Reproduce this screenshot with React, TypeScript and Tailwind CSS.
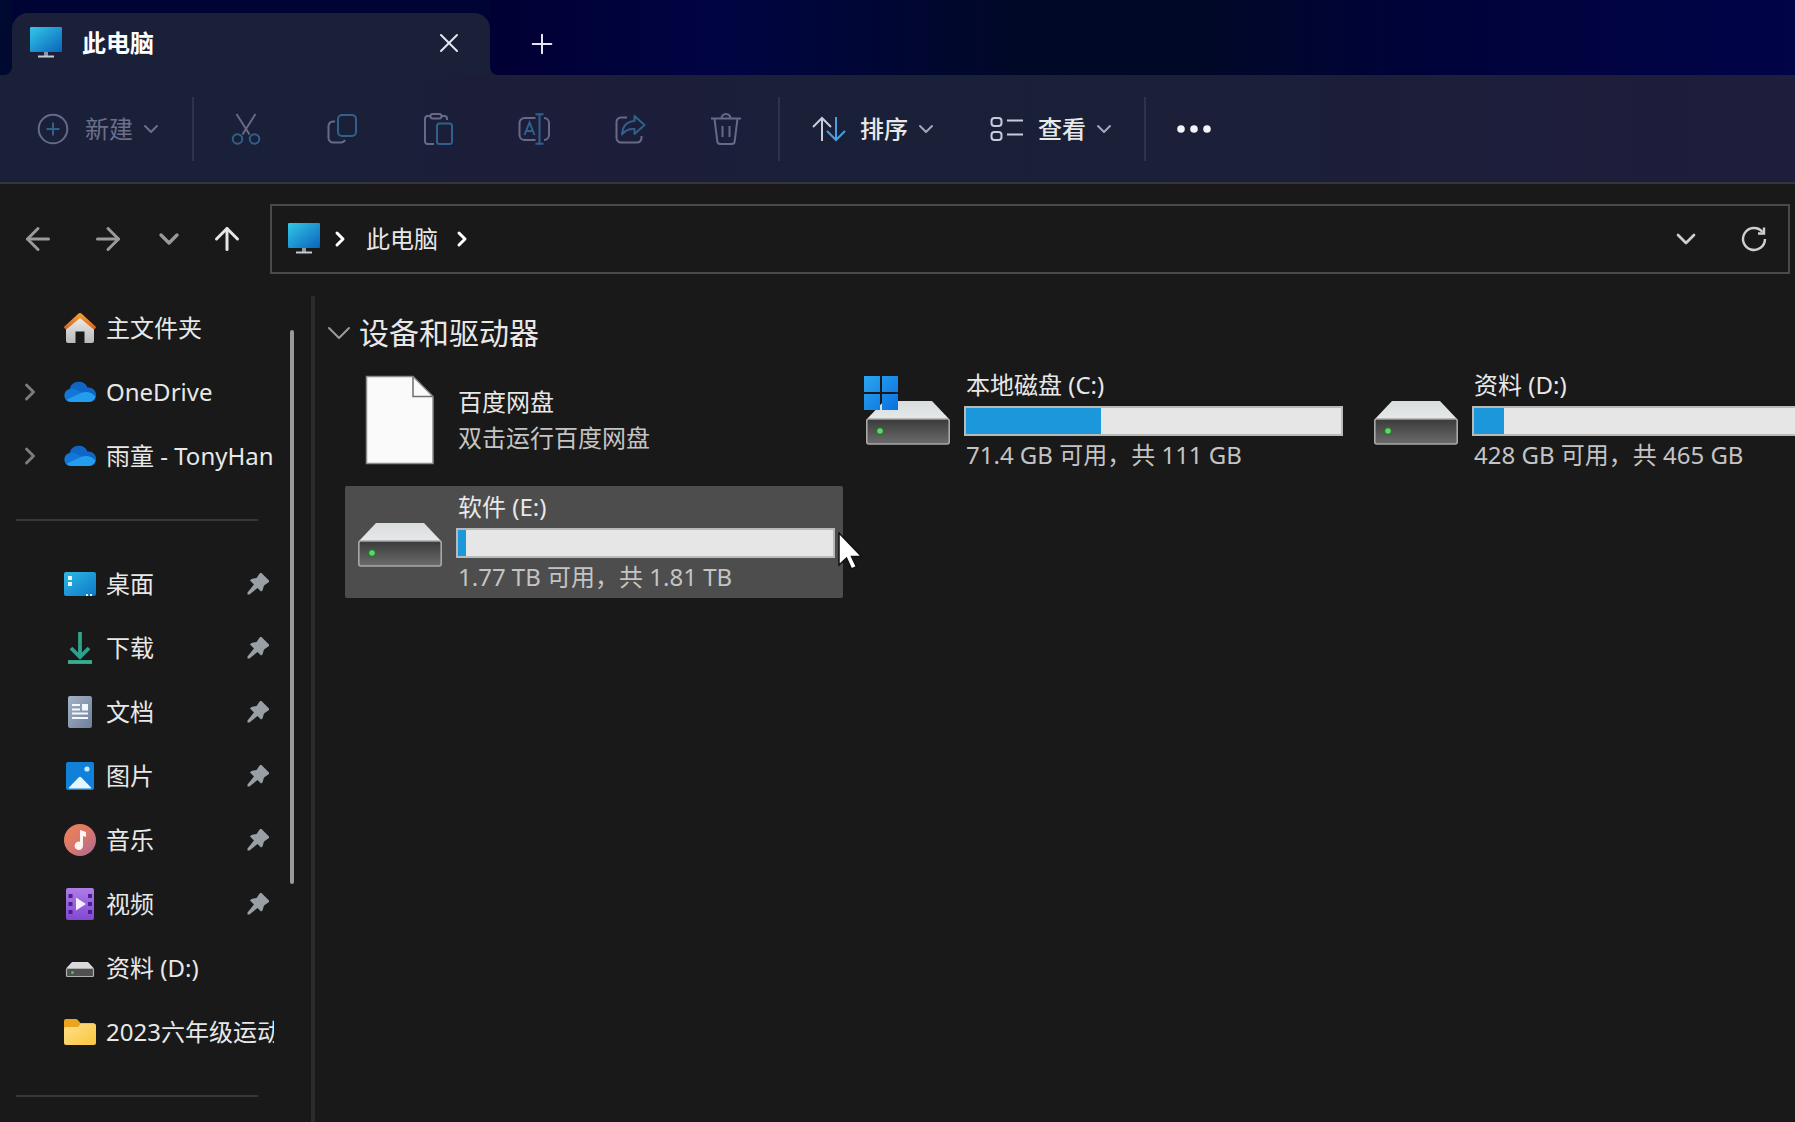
import React from 'react';
import { X, Plus, ChevronDown, ChevronRight, ArrowLeft, ArrowRight, ArrowUp } from 'lucide-react';

const GREY = '#666a88';
const BLUE = '#2f618c';

function MonitorIcon({ id }: { id: string }) {
  return (
    <svg viewBox="0 0 32 32" className="w-8 h-8 shrink-0" aria-hidden="true">
      <defs>
        <linearGradient id={id} x1="0" y1="0" x2="1" y2="1">
          <stop offset="0" stopColor="#31c8e6" />
          <stop offset="1" stopColor="#0b63bd" />
        </linearGradient>
      </defs>
      <rect x="0" y="0" width="32" height="25" rx="1" fill={`url(#${id})`} />
      <path d="M14 25h4v4h-4z" fill="#8a9aa8" />
      <path d="M8 28.5h16v2H8z" fill="#c3ccd3" />
    </svg>
  );
}

function NewIcon() {
  return (
    <svg viewBox="0 0 32 32" className="w-8 h-8" fill="none" strokeWidth="2" aria-hidden="true">
      <circle cx="16" cy="16" r="14.3" stroke={GREY} />
      <path d="M16 9.5v13M9.5 16h13" stroke={BLUE} />
    </svg>
  );
}

function CutIcon() {
  return (
    <svg viewBox="0 0 32 32" className="w-8 h-8" fill="none" strokeWidth="2" aria-hidden="true">
      <path d="M6.5 1l13 20.5M25.5 1l-13 20.5" stroke={GREY} />
      <circle cx="7.5" cy="26" r="4.8" stroke={BLUE} />
      <circle cx="24.5" cy="26" r="4.8" stroke={BLUE} />
    </svg>
  );
}

function CopyIcon() {
  return (
    <svg viewBox="0 0 32 32" className="w-8 h-8" fill="none" strokeWidth="2" aria-hidden="true">
      <path d="M9 8.5H7A4.5 4.5 0 0 0 2.5 13v12A4.5 4.5 0 0 0 7 29.5h8a4.5 4.5 0 0 0 4-2.5" stroke={GREY} />
      <rect x="12" y="2" width="18" height="21" rx="4" stroke={BLUE} />
    </svg>
  );
}

function PasteIcon() {
  return (
    <svg viewBox="0 0 32 32" className="w-8 h-8" fill="none" strokeWidth="2" aria-hidden="true">
      <path d="M8 3H5.5A2.5 2.5 0 0 0 3 5.500v23A2.5 2.5 0 0 0 5.500 31H12M20 3h2.500A2.500 2.500 0 0 1 25 5.500V7" stroke={GREY} />
      <rect x="8.5" y="1" width="11" height="4.5" rx="2.2" stroke={GREY} />
      <rect x="15" y="10.5" width="15" height="20.5" rx="2.5" stroke={BLUE} />
    </svg>
  );
}

function RenameIcon() {
  return (
    <svg viewBox="0 0 32 32" className="w-8 h-8" fill="none" strokeWidth="2" aria-hidden="true">
      <path d="M17.5 5H6.5A5 5 0 0 0 1.5 10v12a5 5 0 0 0 5 5h11M26 5a5 5 0 0 1 5 5v12a5 5 0 0 1-5 5" stroke={GREY} />
      <path d="M6.5 22L11.5 9.5L16.5 22M8.3 18h6.4M21.5 1.5v29M17.5 1.2h8M17.5 30.8h8" stroke={BLUE} />
    </svg>
  );
}

function ShareIcon() {
  return (
    <svg viewBox="0 0 32 32" className="w-8 h-8" fill="none" strokeWidth="2" strokeLinejoin="round" aria-hidden="true">
      <path d="M13 4.5H7A4.5 4.5 0 0 0 2.5 9v16A4.5 4.5 0 0 0 7 29.5h16a4.5 4.5 0 0 0 4.5-4.5v-2" stroke={GREY} />
      <path d="M20.5 3L30.5 12L20.5 21V16C14.5 15.5 11 17.5 8 21.5C8.5 14 12.5 8.5 20.5 8Z" stroke={BLUE} />
    </svg>
  );
}

function TrashIcon() {
  return (
    <svg viewBox="0 0 32 32" className="w-8 h-8" fill="none" stroke={GREY} strokeWidth="2" aria-hidden="true">
      <path d="M1 5.5h30M11.5 5.5a4.500 4.500 0 0 1 9 0M4.5 5.5l2.800 22.800A3 3 0 0 0 10.300 31h11.400a3 3 0 0 0 3-2.700L27.500 5.500M12.500 13v11M19.500 13v11" />
    </svg>
  );
}

function SortIcon() {
  return (
    <svg viewBox="0 0 34 26" className="w-[34px] h-[26px]" fill="none" strokeWidth="2" aria-hidden="true">
      <path d="M10 25V2M1 11l9-9l9 9" stroke="#c9cbdc" />
      <path d="M24 1v23M15 15l9 9l9-9" stroke="#4aa0dc" />
    </svg>
  );
}

function ViewIcon() {
  return (
    <svg viewBox="0 0 34 26" className="w-[34px] h-[26px]" fill="none" stroke="#c9cbdc" strokeWidth="2" aria-hidden="true">
      <rect x="1.5" y="2" width="10" height="8" rx="3" />
      <rect x="1.5" y="16" width="10" height="8" rx="3" />
      <path d="M17 4.5h16M17 18.5h16" />
    </svg>
  );
}

function RefreshIcon() {
  return (
    <svg viewBox="0 0 26 26" className="w-[26px] h-[26px]" fill="none" stroke="#cfcfcf" strokeWidth="2.4" aria-hidden="true">
      <path d="M21.5 6A11 11 0 1 0 24 13" />
      <path d="M23 1.5V7.5h-6" />
    </svg>
  );
}

function DriveIcon({ windows }: { windows?: boolean }) {
  return (
    <svg viewBox="0 0 88 90" className="w-[88px] h-[90px] shrink-0" aria-hidden="true">
      <defs>
        <linearGradient id="driveFront" x1="0" y1="0" x2="0" y2="1">
          <stop offset="0" stopColor="#3a3a3a" />
          <stop offset="1" stopColor="#6c6c6c" />
        </linearGradient>
        <linearGradient id="driveTop" x1="0" y1="0" x2="0" y2="1">
          <stop offset="0" stopColor="#d9dcdd" />
          <stop offset="1" stopColor="#e6e9ea" />
        </linearGradient>
        <linearGradient id="winLogo" x1="0" y1="0" x2="1" y2="1">
          <stop offset="0" stopColor="#2aa5ee" />
          <stop offset="1" stopColor="#0a6fe0" />
        </linearGradient>
      </defs>
      <path d="M20 26h48l17 18H3z" fill="url(#driveTop)" />
      <rect x="2.8" y="44" width="82.4" height="25" rx="2" fill="url(#driveFront)" stroke="#a8a8a8" strokeWidth="1.6" />
      <circle cx="16" cy="56" r="4.5" fill="#1d7a2c" opacity="0.6" />
      <circle cx="16" cy="56" r="2.8" fill="#5fd468" />
      {windows && <path d="M0 1h16v16H0zM18 1h16v16H18zM0 19h16v16H0zM18 19h16v16H18z" fill="url(#winLogo)" />}
    </svg>
  );
}

function FileIcon() {
  return (
    <svg viewBox="0 0 88 90" className="w-[88px] h-[90px] shrink-0" aria-hidden="true">
      <path d="M10.5 1.5H57L77 21.5V88.5H10.5z" fill="#fafafa" stroke="#8c8c8c" strokeWidth="1.5" />
      <path d="M57 1.5V21.5H77" fill="none" stroke="#6f6f6f" strokeWidth="1.5" />
    </svg>
  );
}

function HomeIcon() {
  return (
    <svg viewBox="0 0 32 32" className="w-8 h-8" aria-hidden="true">
      <defs>
        <linearGradient id="homeWall" x1="0" y1="0" x2="0" y2="1">
          <stop offset="0" stopColor="#f0f0f0" />
          <stop offset="1" stopColor="#b9b9b9" />
        </linearGradient>
        <linearGradient id="homeRoof" x1="0" y1="0" x2="0" y2="1">
          <stop offset="0" stopColor="#f7a535" />
          <stop offset="1" stopColor="#d9601e" />
        </linearGradient>
      </defs>
      <path d="M2 14L16 3l14 11v15a2 2 0 0 1-2 2h-7.5V19.5h-9V31H4a2 2 0 0 1-2-2z" fill="url(#homeWall)" />
      <path d="M16 1a2 2 0 0 1 1.4.6L31.6 14.5a1 1 0 0 1 0 1.4l-1 1.1a1 1 0 0 1-1.4 0L16 6L2.800 17a1 1 0 0 1-1.400 0l-1-1.100a1 1 0 0 1 0-1.400L14.600 1.600A2 2 0 0 1 16 1z" fill="url(#homeRoof)" />
    </svg>
  );
}

function CloudIcon() {
  return (
    <svg viewBox="0 0 32 32" className="w-8 h-8" aria-hidden="true">
      <path d="M6.5 26A6.5 6.5 0 0 1 5.5 13.2A9.500 9.500 0 0 1 23.500 11.500A7.300 7.300 0 0 1 32 18.800A7 7 0 0 1 25 26z" fill="#0f66c4" />
      <path d="M5.5 13.2C9 12.2 12 13 14.500 14.800L19 17.800L4.500 25.500A6.500 6.500 0 0 1 5.500 13.200z" fill="#1277d6" />
      <path d="M2.500 23.800L17.500 16.800C20.500 15.600 25 15.500 28 17.600L31.500 20.500A7 7 0 0 1 25 26H6.500A6.500 6.500 0 0 1 2.500 23.800z" fill="#239df0" />
    </svg>
  );
}

function DesktopIcon() {
  return (
    <svg viewBox="0 0 32 32" className="w-8 h-8" aria-hidden="true">
      <defs>
        <linearGradient id="desk" x1="0" y1="0" x2="1" y2="1">
          <stop offset="0" stopColor="#2fb8e4" />
          <stop offset="1" stopColor="#0d78c8" />
        </linearGradient>
      </defs>
      <rect x="0" y="4" width="32" height="24" rx="2" fill="url(#desk)" />
      <path d="M4 8h4v4H4zM4 14h4v4H4z" fill="#e8f8ff" />
      <path d="M22 26h2v2h-2zM26 26h2v2h-2z" fill="#d4efff" />
    </svg>
  );
}

function DownloadIcon() {
  return (
    <svg viewBox="0 0 32 32" className="w-8 h-8" fill="none" strokeWidth="3.8" aria-hidden="true">
      <path d="M16 0V24M7 16l9 9l9-9" stroke="#2aa58c" />
      <path d="M4 30h24" stroke="#36b090" />
    </svg>
  );
}

function DocumentIcon() {
  return (
    <svg viewBox="0 0 32 32" className="w-8 h-8" aria-hidden="true">
      <defs>
        <linearGradient id="docBg" x1="0" y1="0" x2="1" y2="1">
          <stop offset="0" stopColor="#a5b3c6" />
          <stop offset="1" stopColor="#6d809b" />
        </linearGradient>
      </defs>
      <rect x="4" y="0" width="24" height="32" rx="2" fill="url(#docBg)" />
      <path d="M8 8h8v2H8zM8 12.5h8v2H8zM8 16.5h16v2H8zM8 21h16v2H8zM18 8h6v6.5h-6z" fill="#f4f8fc" />
    </svg>
  );
}

function PictureIcon() {
  return (
    <svg viewBox="0 0 32 32" className="w-8 h-8" aria-hidden="true">
      <rect x="2" y="2" width="28" height="28" rx="2" fill="#1180d8" />
      <path d="M4.500 28L14.600 17.500a2 2 0 0 1 2.800 0L27.500 28a2 2 0 0 1-1.500.5H6A2 2 0 0 1 4.500 28z" fill="#e6f6ff" />
      <circle cx="23" cy="9" r="2.6" fill="#c4ebff" />
    </svg>
  );
}

function MusicIcon() {
  return (
    <svg viewBox="0 0 32 32" className="w-8 h-8" aria-hidden="true">
      <defs>
        <linearGradient id="music" x1="0" y1="0" x2="1" y2="1">
          <stop offset="0" stopColor="#ee8355" />
          <stop offset="0.5" stopColor="#d9776c" />
          <stop offset="1" stopColor="#a9689a" />
        </linearGradient>
      </defs>
      <circle cx="16" cy="16" r="16" fill="url(#music)" />
      <path d="M16 6L22 8V13L19 12V21.500A4.200 4.200 0 1 1 16 17.800z" fill="#fff4ef" />
    </svg>
  );
}

function VideoIcon() {
  return (
    <svg viewBox="0 0 32 32" className="w-8 h-8" aria-hidden="true">
      <defs>
        <linearGradient id="video" x1="0" y1="0" x2="0" y2="1">
          <stop offset="0" stopColor="#b07ce6" />
          <stop offset="1" stopColor="#8148d2" />
        </linearGradient>
      </defs>
      <rect x="2" y="0" width="28" height="32" rx="2" fill="url(#video)" />
      <path d="M4.5 6h4v4h-4zM4.5 14h4v4h-4zM4.5 22h4v4h-4zM24 6h4v4h-4zM24 14h4v4h-4zM24 22h4v4h-4z" fill="#4a2190" />
      <path d="M12 9.5L22 16L12 22.5z" fill="#f6edff" />
    </svg>
  );
}

function SmallDriveIcon() {
  return (
    <svg viewBox="0 0 32 32" className="w-8 h-8" aria-hidden="true">
      <path d="M8 10h16l6 6.5H2z" fill="#d9dadb" />
      <rect x="2.5" y="16.5" width="27" height="8" rx="1" fill="#505050" stroke="#b0b0b0" strokeWidth="1.2" />
      <circle cx="8.5" cy="20.5" r="1.5" fill="#45c458" />
    </svg>
  );
}

function FolderIcon() {
  return (
    <svg viewBox="0 0 32 32" className="w-8 h-8" aria-hidden="true">
      <defs>
        <linearGradient id="folder" x1="0" y1="0" x2="1" y2="1">
          <stop offset="0" stopColor="#ffe08a" />
          <stop offset="1" stopColor="#f9c53c" />
        </linearGradient>
      </defs>
      <path d="M0 5a2 2 0 0 1 2-2h10a2 2 0 0 1 1.5.7L16.5 7H30v10H0z" fill="#eba41e" />
      <path d="M2 11h12l3-3.5h13a2 2 0 0 1 2 2V27a2 2 0 0 1-2 2H2a2 2 0 0 1-2-2V13a2 2 0 0 1 2-2z" fill="url(#folder)" />
    </svg>
  );
}

function PinIcon() {
  return (
    <svg viewBox="0 0 22 22" className="w-[22px] h-[22px]" aria-hidden="true">
      <path d="M13 0L14.5 0L22 7.500V9L17 12.500L15.500 17.500L14 18.500L10.500 15L2.500 21.500L0.500 21.500L0.500 19.500L7 11.500L3 7.500L4.500 6L9.500 5z" fill="#98a0a5" />
    </svg>
  );
}

interface ToolButtonProps {
  label: string;
  children: React.ReactNode;
}

function ToolButton({ label, children }: ToolButtonProps) {
  return (
    <button aria-label={label} className="w-24 h-16 flex items-center justify-center">
      {children}
    </button>
  );
}

function Divider() {
  return <div className="w-[2px] h-16 bg-[#2e3150]" />;
}

interface SideItemProps {
  icon: React.ReactNode;
  label: string;
  expandable?: boolean;
  pinned?: boolean;
}

function SideItem({ icon, label, expandable, pinned }: SideItemProps) {
  return (
    <li>
      <a href="#" className="h-16 px-4 flex items-center">
        <span className="w-12 shrink-0">
          {expandable && <ChevronRight className="w-7 h-7 text-[#7d7d7d]" strokeWidth={2.5} />}
        </span>
        <span className="shrink-0">{icon}</span>
        <span className="ml-[10px] flex-1 min-w-0 overflow-hidden whitespace-nowrap">{label}</span>
        {pinned && <span className="shrink-0 mr-[5px]"><PinIcon /></span>}
      </a>
    </li>
  );
}

function SideSeparator() {
  return (
    <li className="h-16 pl-4 pr-8 flex items-center" role="separator">
      <div className="w-full h-[2px] bg-[#383838]" />
    </li>
  );
}

interface DriveProps {
  name: string;
  detail: string;
  used: number;
  windows?: boolean;
  selected?: boolean;
}

function DriveTile({ name, detail, used, windows, selected }: DriveProps) {
  return (
    <button className={`h-28 pl-[11px] pr-2 flex items-center text-left rounded-[2px] ${selected ? 'bg-[#4d4d4d]' : ''}`}>
      <DriveIcon windows={windows} />
      <span className="ml-3 flex-1 flex flex-col">
        <span className="pl-[2px] leading-8">{name}</span>
        <span className="h-[30px] mt-[5px] mb-[3px] border-2 border-[#b9b9b9] bg-[#e6e6e6]">
          <span className="block h-full bg-[#1b98dc]" style={{ width: `${used}%` }} />
        </span>
        <span className="pl-[2px] leading-8 text-[#c4c4c4]">{detail}</span>
      </span>
    </button>
  );
}

export default function App() {
  return (
    <div className="relative min-h-screen flex flex-col overflow-hidden bg-[#191919] text-[#e8e8e8] text-2xl font-['Noto_Sans','Noto_Sans_CJK_SC',sans-serif]">
      <header className="bg-[linear-gradient(90deg,#1a2038_0%,#1a2038_15%,#1d1d38_32%,#1a2038_50%,#1b1f38_65%,#1e1d3c_100%)]">
        <div className="h-[75px] flex">
          <div className="w-3 rounded-br-lg bg-[#000a30]" />
          <div className="w-[478px] pt-[13px] bg-[#000434] flex">
            <div className="flex-1 px-[18px] pb-[2px] flex items-center rounded-t-2xl bg-[#1b2039]">
              <MonitorIcon id="tabMonitor" />
              <span className="ml-5 flex-1 font-bold text-white">此电脑</span>
              <button aria-label="关闭标签页" className="mr-[7px]">
                <X className="w-8 h-8 text-[#e4e6f0]" strokeWidth={1.5} />
              </button>
            </div>
          </div>
          <div className="flex-1 pl-9 pt-3 flex items-center rounded-bl-lg bg-[linear-gradient(90deg,#000034_0%,#000442_18%,#000828_40%,#000828_55%,#000338_70%,#000448_100%)]">
            <button aria-label="新标签页">
              <Plus className="w-8 h-8 text-[#e4e6f0]" strokeWidth={1.5} />
            </button>
          </div>
        </div>

        <div className="h-[109px] flex items-center border-b-2 border-[#35353d]">
          <button className="w-[192px] pl-[37px] flex items-center text-[#6c6f8a]">
            <NewIcon />
            <span className="ml-4">新建</span>
            <ChevronDown className="w-6 h-6 ml-[6px]" />
          </button>
          <Divider />
          <div className="px-1 flex">
            <ToolButton label="剪切"><CutIcon /></ToolButton>
            <ToolButton label="复制"><CopyIcon /></ToolButton>
            <ToolButton label="粘贴"><PasteIcon /></ToolButton>
            <ToolButton label="重命名"><RenameIcon /></ToolButton>
            <ToolButton label="共享"><ShareIcon /></ToolButton>
            <ToolButton label="删除"><TrashIcon /></ToolButton>
          </div>
          <Divider />
          <button className="ml-8 flex items-center font-medium">
            <SortIcon />
            <span className="ml-[14px]">排序</span>
            <ChevronDown className="w-6 h-6 ml-[6px] text-[#a3a6ba]" />
          </button>
          <button className="ml-[52px] flex items-center font-medium">
            <ViewIcon />
            <span className="ml-[14px]">查看</span>
            <ChevronDown className="w-6 h-6 ml-[6px] text-[#a3a6ba]" />
          </button>
          <div className="ml-7"><Divider /></div>
          <ToolButton label="查看更多">
            <svg viewBox="0 0 34 8" className="w-[34px] h-2" fill="#f4f4f8" aria-hidden="true">
              <circle cx="4" cy="4" r="3.8" />
              <circle cx="17" cy="4" r="3.8" />
              <circle cx="30" cy="4" r="3.8" />
            </svg>
          </ToolButton>
        </div>
      </header>

      <nav className="pt-5 pb-[22px] pr-[5px] flex items-center">
        <div className="w-[270px] pl-5 flex items-center">
          <button aria-label="后退"><ArrowLeft className="w-9 h-9 text-[#9a9a9a]" strokeWidth={2} /></button>
          <button aria-label="前进" className="ml-[34px]"><ArrowRight className="w-9 h-9 text-[#9a9a9a]" strokeWidth={2} /></button>
          <button aria-label="最近的位置" className="ml-[27px]"><ChevronDown className="w-8 h-8 text-[#9a9a9a]" strokeWidth={2.5} /></button>
          <button aria-label="上移" className="ml-6"><ArrowUp className="w-9 h-9 text-[#e6e6e6]" strokeWidth={2} /></button>
        </div>
        <div className="h-[70px] flex-1 pl-4 pr-[21px] flex items-center border-2 border-[#4a4a4a]">
          <MonitorIcon id="pathMonitor" />
          <ChevronRight className="w-6 h-6 ml-2 text-white" strokeWidth={3} />
          <a href="#" className="ml-[14px]">此电脑</a>
          <ChevronRight className="w-6 h-6 ml-3 text-white" strokeWidth={3} />
          <button aria-label="以前的位置" className="ml-auto"><ChevronDown className="w-8 h-8 text-[#cfcfcf]" strokeWidth={2} /></button>
          <button aria-label="刷新" className="ml-[39px]"><RefreshIcon /></button>
        </div>
      </nav>

      <div className="flex-1 flex">
        <aside className="w-[294px] shrink-0 flex">
          <ul className="flex-1 min-w-0">
            <SideItem icon={<HomeIcon />} label="主文件夹" />
            <SideItem icon={<CloudIcon />} label="OneDrive" expandable />
            <SideItem icon={<CloudIcon />} label="雨童 - TonyHan" expandable />
            <SideSeparator />
            <SideItem icon={<DesktopIcon />} label="桌面" pinned />
            <SideItem icon={<DownloadIcon />} label="下载" pinned />
            <SideItem icon={<DocumentIcon />} label="文档" pinned />
            <SideItem icon={<PictureIcon />} label="图片" pinned />
            <SideItem icon={<MusicIcon />} label="音乐" pinned />
            <SideItem icon={<VideoIcon />} label="视频" pinned />
            <SideItem icon={<SmallDriveIcon />} label="资料 (D:)" />
            <SideItem icon={<FolderIcon />} label="2023六年级运动" />
            <SideSeparator />
          </ul>
          <div className="w-1 h-[554px] mt-[34px] rounded-full bg-[#9a9a9a]" />
        </aside>
        <div className="w-1 ml-[17px] bg-[#2b2b2b]" />

        <main className="flex-1 min-w-0 pl-1 pt-[14px] overflow-hidden">
          <h2 className="flex items-center text-3xl leading-[46px]">
            <ChevronDown className="w-10 h-10 text-[#9a9a9a]" strokeWidth={1.2} />
            设备和驱动器
          </h2>
          <div className="mt-2 ml-[26px] grid grid-cols-[repeat(3,498px)] gap-[10px]">
            <button className="h-28 pl-[11px] flex items-center text-left">
              <FileIcon />
              <span className="ml-[14px] flex flex-col">
                <span className="leading-9">百度网盘</span>
                <span className="leading-9 text-[#c4c4c4]">双击运行百度网盘</span>
              </span>
            </button>
            <DriveTile name="本地磁盘 (C:)" detail="71.4 GB 可用，共 111 GB" used={36} windows />
            <DriveTile name="资料 (D:)" detail="428 GB 可用，共 465 GB" used={8} />
            <DriveTile name="软件 (E:)" detail="1.77 TB 可用，共 1.81 TB" used={2} selected />
          </div>
        </main>
      </div>

      {/* mouse pointer */}
      <svg viewBox="0 0 24 38" className="absolute left-[838px] top-[532px] w-6 h-[38px]" aria-hidden="true">
        <path d="M1 1V33L8.5 26L13.5 37L18.5 34.8L13.5 24.5H23.5z" fill="#ffffff" stroke="#111111" strokeWidth="1.5" />
      </svg>
    </div>
  );
}
